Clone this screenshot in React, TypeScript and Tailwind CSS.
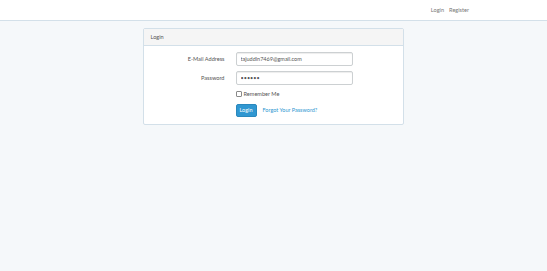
export default function App() {
  return (
    <div className="min-h-[271px] bg-[#f5f8fa] font-['Lato',sans-serif] text-[5.5px] text-[#636b6f]">
      <nav className="flex h-[21px] items-center justify-end gap-[5px] border-b border-[#d3e0e9] bg-white pr-[78px]">
        <a className="text-[5.6px] text-[#777]">Login</a>
        <a className="text-[5.6px] text-[#777]">Register</a>
      </nav>

      <div className="flex justify-center pt-[7px]">
        <div className="ml-[-1px] w-[261px] rounded-[2px] border border-[#d3e0e9] bg-white">
          <div className="flex h-[17px] items-center border-b border-[#d3e0e9] bg-[#f5f5f5] px-[7px] text-[5.6px] text-[#555]">
            Login
          </div>
          <div className="flex flex-col px-[7px] pb-[7px] pt-[6px]">
            <div className="flex h-[14px] items-center">
              <label className="w-[74px] text-right text-[5.6px] text-[#555]">E-Mail Address</label>
              <input
                readOnly
                value="tajuddin7469@gmail.com"
                className="ml-[11px] h-[14px] w-[117px] rounded-[2px] border border-[#ccd0d2] px-[4px] text-[5.5px] text-[#555] shadow-[inset_0_1px_1px_rgba(0,0,0,0.075)] outline-none"
              />
            </div>
            <div className="mt-[5px] flex h-[14px] items-center">
              <label className="w-[74px] text-right text-[5.6px] text-[#555]">Password</label>
              <input
                readOnly
                type="password"
                value="secret"
                className="ml-[11px] h-[14px] w-[117px] rounded-[2px] border border-[#ccd0d2] px-[4px] text-[5.5px] text-[#555] shadow-[inset_0_1px_1px_rgba(0,0,0,0.075)] outline-none"
              />
            </div>
            <div className="mt-[3px] flex h-[12px] items-center pl-[85px]">
              <span className="h-[6px] w-[6px] rounded-[1px] border border-[#8a8a8a] bg-white" />
              <span className="ml-[2px] text-[5.6px] text-[#555]">Remember Me</span>
            </div>
            <div className="mt-[4px] flex h-[13px] items-center pl-[85px]">
              <button className="h-[13px] w-[21px] rounded-[2px] border border-[#2a88bd] bg-[#3097d1] text-[5.5px] text-white">
                Login
              </button>
              <a className="ml-[6px] text-[5.5px] text-[#3097d1]">Forgot Your Password?</a>
            </div>
          </div>
        </div>
      </div>
    </div>
  )
}
